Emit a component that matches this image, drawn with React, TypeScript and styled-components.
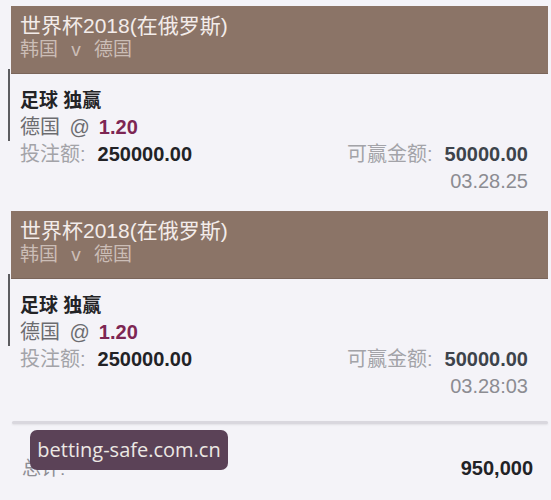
import React from "react";
import styled, { createGlobalStyle } from "styled-components";

const GlobalStyle = createGlobalStyle`
  body {
    margin: 0;
    background: #f4f3f8;
    font-family: "Liberation Sans", "Noto Sans CJK SC", sans-serif;
  }
`;

const Page = styled.div`
  position: relative;
  width: 551px;
  height: 500px;
  padding: 6px 3px 0 8px;
  box-sizing: border-box;
  overflow: hidden;
`;

const Card = styled.section`
  margin-bottom: 16px;
`;

const Header = styled.div`
  margin-left: 3px;
  height: 68px;
  padding: 8px 9px 0;
  box-sizing: border-box;
  background: #8b7467;
  border-bottom: 1px solid #7a655a;
`;

const Title = styled.div`
  font-size: 21px;
  line-height: 24px;
  color: #f3ecea;
`;

const Teams = styled.div`
  font-size: 19px;
  line-height: 24px;
  color: #cbbdb6;
  word-spacing: 8px;
`;

const Selection = styled.div`
  margin-top: -5px;
  padding: 18px 0 0 10px;
  border-left: 2px solid #5c5c60;
`;

const Row = styled.div<{ $right?: boolean }>`
  display: flex;
  align-items: baseline;
  justify-content: ${(p) => (p.$right ? "flex-end" : "space-between")};
  height: 27px;
  line-height: 27px;
  font-size: 20px;
`;

const Plain = styled.div`
  display: flex;
  justify-content: space-between;
  padding: 0 20px 0 12px;
`;

const Market = styled.span`
  font-weight: bold;
  color: #232326;
  font-size: 19px;
`;

const Pick = styled.span`
  color: #6c6c70;
  font-size: 20px;
  word-spacing: 4px;
`;

const Odds = styled.b`
  color: #7d2653;
  margin-left: 9px;
`;

const Label = styled.span`
  color: #a3a3a8;
  margin-right: 12px;
`;

const Amount = styled.b<{ $muted?: boolean }>`
  color: ${(p) => (p.$muted ? "#3d434b" : "#222226")};
`;

const Time = styled.span`
  color: #8c8c92;
`;

/* margin collapses with the card's bottom margin, so it has to beat 16px */
const Divider = styled.hr`
  margin: 21px 0 0 4px;
  height: 3px;
  border: none;
  border-radius: 2px;
  background: #d9d7de;
  box-shadow: 0 1px 2px rgba(0, 0, 0, 0.08);
`;

const Total = styled.div`
  display: flex;
  justify-content: space-between;
  align-items: baseline;
  margin-top: 29px;
  padding: 0 15px 0 14px;
  font-size: 20px;
`;

const TotalLabel = styled.span`
  color: #8e8e94;
  font-size: 19px;
`;

const Watermark = styled.div`
  position: absolute;
  left: 30px;
  top: 430px;
  width: 198px;
  height: 40px;
  border-radius: 7px;
  background: #5b4257;
  color: #ece8e4;
  font-family: "Open Sans", "Noto Sans", sans-serif;
  font-size: 20px;
  line-height: 40px;
  text-align: center;
`;

type Bet = { time: string };

const bets: Bet[] = [{ time: "03.28.25" }, { time: "03.28:03" }];

function BetCard({ time }: Bet) {
  return (
    <Card>
      <Header>
        <Title>世界杯2018(在俄罗斯)</Title>
        <Teams>韩国 v 德国</Teams>
      </Header>
      <Selection>
        <Row>
          <Market>足球 独赢</Market>
        </Row>
        <Row>
          <span>
            <Pick>德国 @</Pick>
            <Odds>1.20</Odds>
          </span>
        </Row>
      </Selection>
      <Plain>
        <Row>
          <span>
            <Label>投注额:</Label>
            <Amount>250000.00</Amount>
          </span>
        </Row>
        <Row>
          <span>
            <Label>可赢金额:</Label>
            <Amount $muted>50000.00</Amount>
          </span>
        </Row>
      </Plain>
      <Plain>
        <span />
        <Row $right>
          <Time>{time}</Time>
        </Row>
      </Plain>
    </Card>
  );
}

export default function App() {
  return (
    <>
      <GlobalStyle />
      <Page>
        {bets.map((b) => (
          <BetCard key={b.time} time={b.time} />
        ))}
        <Divider />
        <Total>
          <TotalLabel>总计:</TotalLabel>
          <Amount>950,000</Amount>
        </Total>
        <Watermark>betting-safe.com.cn</Watermark>
      </Page>
    </>
  );
}
